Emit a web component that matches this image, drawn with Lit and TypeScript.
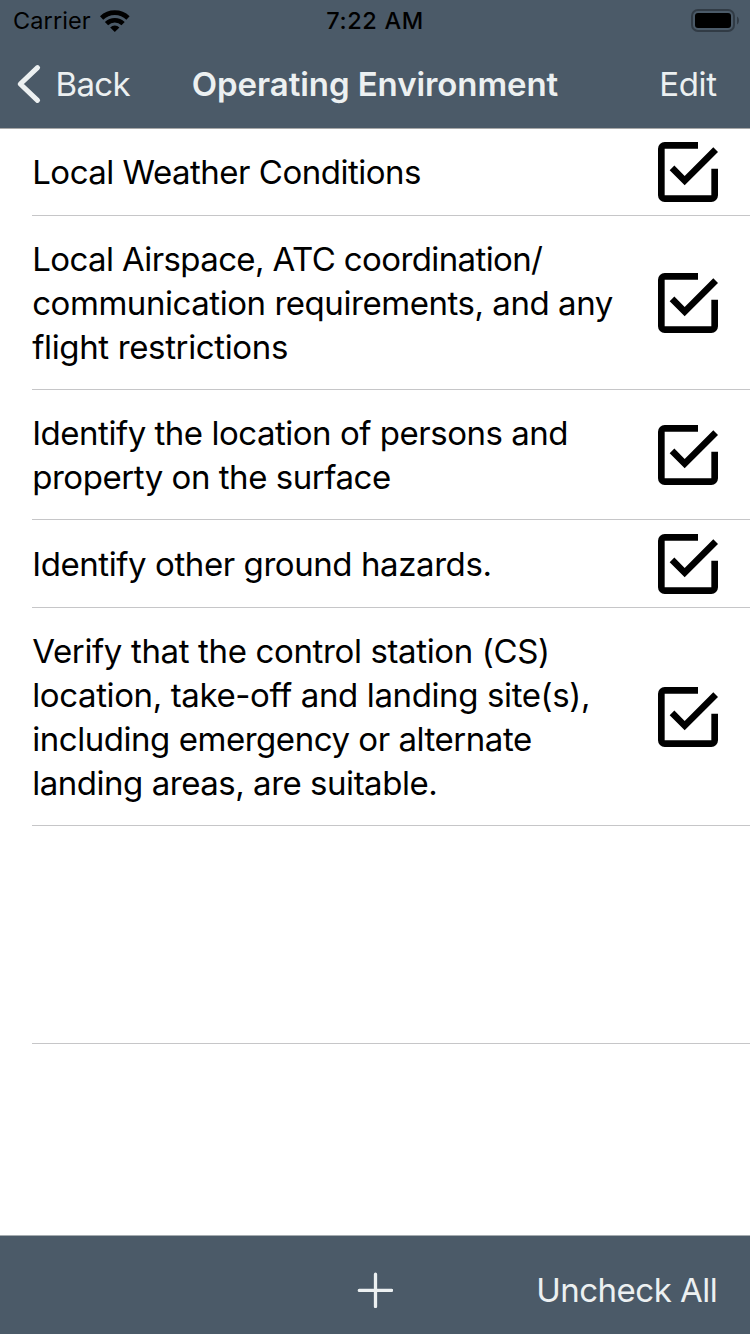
import { LitElement, html, css } from "lit";
import { customElement, property, state } from "lit/decorators.js";
import { styleMap } from "lit/directives/style-map.js";

interface Line {
  text: string;
  tracking: number;
}

interface Item {
  lines: Line[];
}

const line = (text: string, tracking: number): Line => ({ text, tracking });

const ITEMS: Item[] = [
  { lines: [line("Local Weather Conditions", -0.5)] },
  {
    lines: [
      line("Local Airspace, ATC coordination/", -0.61),
      line("communication requirements, and any", -0.45),
      line("flight restrictions", -0.36),
    ],
  },
  {
    lines: [
      line("Identify the location of persons and", -0.48),
      line("property on the surface", -0.46),
    ],
  },
  { lines: [line("Identify other ground hazards.", -0.42)] },
  {
    lines: [
      line("Verify that the control station (CS)", -0.36),
      line("location, take-off and landing site(s),", -0.38),
      line("including emergency or alternate", -0.46),
      line("landing areas, are suitable.", -0.47),
    ],
  },
];

@customElement("status-bar")
export class StatusBar extends LitElement {
  static styles = css`
    :host {
      display: grid;
      grid-template-columns: 1fr auto 1fr;
      align-items: center;
      height: 40px;
      color: #000;
      font-size: 23.5px;
      line-height: 41px;
    }
    .left {
      display: flex;
      align-items: center;
      gap: 9.4px;
      padding-left: 13px;
      letter-spacing: 0.1px;
    }
    .time {
      font-weight: 500;
      letter-spacing: 0.65px;
    }
    .right {
      display: flex;
      justify-content: flex-end;
      padding-right: 11px;
    }
    svg {
      display: block;
    }
  `;
  render() {
    return html`
      <div class="left">
        <span>Carrier</span>
        <svg width="30" height="22" viewBox="0 0 30 22">
          <g fill="none" stroke="#000" stroke-width="4.700">
            <path d="M1.600 8a19 19 0 0 1 26.400 0" />
            <path d="M6.500 13.600a12 12 0 0 1 16.600 0" />
          </g>
          <path d="M14.800 22l-4.600-4.600a6.500 6.500 0 0 1 9.200 0z" />
        </svg>
      </div>
      <span class="time">7:22 AM</span>
      <div class="right">
        <svg width="48" height="24" viewBox="0 0 48 24">
          <rect x="1" y="1" width="42" height="21" rx="6" fill="none" stroke="#313b45" stroke-width="2" />
          <rect x="4" y="4" width="36" height="15" rx="3" />
          <path d="M46 7.500c2.600 1.200 2.600 6.800 0 8z" fill="#313b45" />
        </svg>
      </div>
    `;
  }
}

@customElement("nav-bar")
export class NavBar extends LitElement {
  @property() heading = "";

  static styles = css`
    :host {
      display: grid;
      grid-template-columns: 1fr auto 1fr;
      align-items: center;
      height: 88px;
      color: #ecf0f1;
      line-height: 44px;
    }
    .back {
      display: flex;
      align-items: center;
      gap: 13.4px;
      padding-left: 16px;
      letter-spacing: -0.6px;
    }
    .heading {
      font-weight: 600;
      letter-spacing: -0.08px;
    }
    .edit {
      justify-self: end;
      padding-right: 33.2px;
      letter-spacing: -0.3px;
    }
    svg {
      display: block;
    }
  `;
  render() {
    return html`
      <div class="back">
        <svg width="26" height="40" viewBox="0 0 26 40">
          <path
            d="M21.500 3.700L4.300 20l17.200 16.300"
            fill="none"
            stroke="#ecf0f1"
            stroke-width="5.100"
            stroke-linecap="round"
            stroke-linejoin="round"
          />
        </svg>
        <span>Back</span>
      </div>
      <span class="heading">${this.heading}</span>
      <span class="edit">Edit</span>
    `;
  }
}

@customElement("check-row")
export class CheckRow extends LitElement {
  @property({ attribute: false }) item!: Item;

  static styles = css`
    :host {
      display: flex;
      padding-left: 32px;
      line-height: 44px;
      color: #000;
    }
    .body {
      flex: 1;
      display: flex;
      align-items: center;
      justify-content: space-between;
      box-sizing: border-box;
      min-height: 88px;
      padding: 21px 32px 20px 0;
      border-bottom: 1px solid #c6c6c8;
    }
    .single {
      padding-top: 0;
      padding-bottom: 0;
    }
    .text {
      margin-left: 0.2px;
    }
    .line {
      display: block;
      white-space: nowrap;
    }
    svg {
      display: block;
      flex: none;
    }
  `;
  render() {
    const lines = this.item.lines;
    return html`
      <div class="body ${lines.length === 1 ? "single" : ""}">
        <div class="text">
          ${lines.map(
            (l) => html`<span class="line" style=${styleMap({ letterSpacing: `${l.tracking}px` })}>${l.text}</span>`
          )}
        </div>
        <svg width="60" height="60" viewBox="3 3 18 18">
          <path
            d="M19 19H5V5h10V3H5a2 2 0 0 0-2 2v14a2 2 0 0 0 2 2h14a2 2 0 0 0 2-2v-8h-2zM7.910 10.080L6.500 11.500 11 16 21 6l-1.410-1.420L11 13.170z"
          />
        </svg>
      </div>
    `;
  }
}

@customElement("tool-bar")
export class ToolBar extends LitElement {
  static styles = css`
    :host {
      display: grid;
      grid-template-columns: 1fr auto 1fr;
      align-items: center;
      box-sizing: border-box;
      height: 99px;
      padding-top: 10px;
      border-top: 1px solid #a5acb0;
      background: #4b5a68;
      color: #ecf0f1;
      line-height: 44px;
    }
    .add {
      grid-column: 2;
      display: block;
    }
    .uncheck {
      justify-self: end;
      padding-right: 32.8px;
      letter-spacing: -0.52px;
    }
  `;
  render() {
    return html`
      <svg class="add" width="36" height="36" viewBox="0 0 36 36">
        <path
          d="M18.500 2.200v32.400M2.300 18.400h32.400"
          fill="none"
          stroke="#ecf0f1"
          stroke-width="3.300"
          stroke-linecap="round"
        />
      </svg>
      <span class="uncheck">Uncheck All</span>
    `;
  }
}

@customElement("app-root")
export class AppRoot extends LitElement {
  @state() private items = ITEMS;

  static styles = css`
    :host {
      display: flex;
      flex-direction: column;
      width: 750px;
      height: 1334px;
      overflow: hidden;
      background: #fff;
      font-family: Inter, "Liberation Sans", sans-serif;
      font-size: 33px;
    }
    .header {
      height: 128px;
      background: #4b5a68;
      box-shadow: 0 1px 0 #a8a8a8;
      z-index: 1;
    }
    .list {
      flex: 1;
    }
    .blank {
      box-sizing: border-box;
      height: 218px;
      margin-left: 32px;
      border-bottom: 1px solid #c6c6c8;
    }
  `;
  render() {
    return html`
      <div class="header">
        <status-bar></status-bar>
        <nav-bar heading="Operating Environment"></nav-bar>
      </div>
      <div class="list">
        ${this.items.map((item) => html`<check-row .item=${item}></check-row>`)}
        <div class="blank"></div>
      </div>
      <tool-bar></tool-bar>
    `;
  }
}
